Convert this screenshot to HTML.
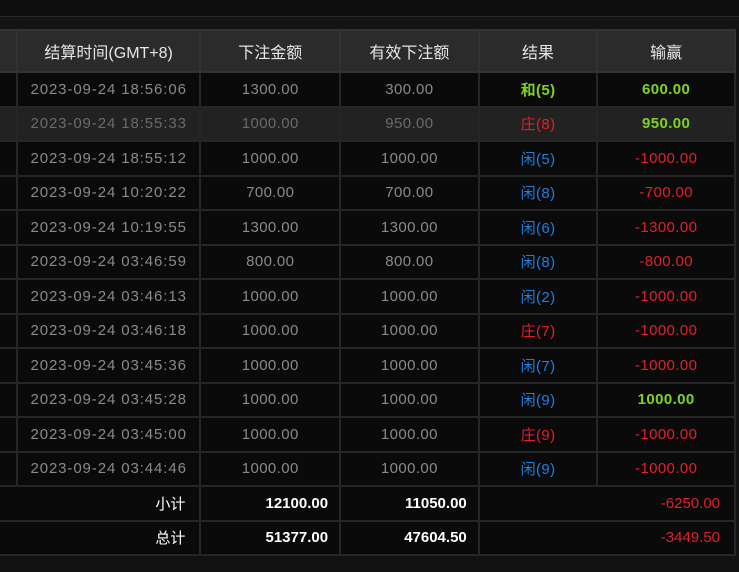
<!DOCTYPE html>
<html><head><meta charset="utf-8"><style>
*{margin:0;padding:0;box-sizing:border-box}
body{width:739px;height:572px;background:#111;overflow:hidden;font-family:"Liberation Sans","Noto Sans CJK SC",sans-serif;position:relative}
.top{position:absolute;left:0;top:0;width:739px;height:17px;background:#0e0e0e;border-bottom:1px solid #2a2a2a}
.band{position:absolute;left:0;top:18px;width:739px;height:11px;background:#141414}
table{position:absolute;left:-2px;top:29px;border-collapse:collapse;width:738px}
td{border:2px solid #262626;text-align:center;font-size:15px;letter-spacing:0.4px;color:#8a8a8a;height:34.5px;padding:0;background:#0a0a0a}
td.d{letter-spacing:0.9px}
tr.h td{background:#2b2b2b;color:#e6e6e6;height:42px;font-size:16px;border-color:#333;letter-spacing:0}
tr.hl td{background:#222;color:#6a6a6a}
.g{color:#7ed321!important;font-weight:bold}.r{color:#e0202a!important}.b{color:#1e7fe0!important}
tr.s td{text-align:right;color:#fff;font-weight:bold;padding-right:11px;border-left-color:#262626;letter-spacing:0}
tr.s td.l{font-weight:normal;padding-right:14px}
tr.s td.n{color:#e0202a;font-weight:normal;padding-right:14px}
</style></head><body>
<div class="top"></div><div class="band"></div>
<table>
<colgroup><col style="width:18px"><col style="width:184px"><col style="width:140px"><col style="width:139px"><col style="width:119px"><col style="width:138px"></colgroup>
<tr class="h"><td></td><td>结算时间(GMT+8)</td><td>下注金额</td><td>有效下注额</td><td>结果</td><td>输赢</td></tr>
<tr><td></td><td class="d">2023-09-24 18:56:06</td><td>1300.00</td><td>300.00</td><td class="g">和(5)</td><td class="g">600.00</td></tr>
<tr class="hl"><td></td><td class="d">2023-09-24 18:55:33</td><td>1000.00</td><td>950.00</td><td class="r">庄(8)</td><td class="g">950.00</td></tr>
<tr><td></td><td class="d">2023-09-24 18:55:12</td><td>1000.00</td><td>1000.00</td><td class="b">闲(5)</td><td class="r">-1000.00</td></tr>
<tr><td></td><td class="d">2023-09-24 10:20:22</td><td>700.00</td><td>700.00</td><td class="b">闲(8)</td><td class="r">-700.00</td></tr>
<tr><td></td><td class="d">2023-09-24 10:19:55</td><td>1300.00</td><td>1300.00</td><td class="b">闲(6)</td><td class="r">-1300.00</td></tr>
<tr><td></td><td class="d">2023-09-24 03:46:59</td><td>800.00</td><td>800.00</td><td class="b">闲(8)</td><td class="r">-800.00</td></tr>
<tr><td></td><td class="d">2023-09-24 03:46:13</td><td>1000.00</td><td>1000.00</td><td class="b">闲(2)</td><td class="r">-1000.00</td></tr>
<tr><td></td><td class="d">2023-09-24 03:46:18</td><td>1000.00</td><td>1000.00</td><td class="r">庄(7)</td><td class="r">-1000.00</td></tr>
<tr><td></td><td class="d">2023-09-24 03:45:36</td><td>1000.00</td><td>1000.00</td><td class="b">闲(7)</td><td class="r">-1000.00</td></tr>
<tr><td></td><td class="d">2023-09-24 03:45:28</td><td>1000.00</td><td>1000.00</td><td class="b">闲(9)</td><td class="g">1000.00</td></tr>
<tr><td></td><td class="d">2023-09-24 03:45:00</td><td>1000.00</td><td>1000.00</td><td class="r">庄(9)</td><td class="r">-1000.00</td></tr>
<tr><td></td><td class="d">2023-09-24 03:44:46</td><td>1000.00</td><td>1000.00</td><td class="b">闲(9)</td><td class="r">-1000.00</td></tr>
<tr class="s"><td colspan="2" class="l">小计</td><td>12100.00</td><td>11050.00</td><td colspan="2" class="n">-6250.00</td></tr>
<tr class="s"><td colspan="2" class="l">总计</td><td>51377.00</td><td>47604.50</td><td colspan="2" class="n">-3449.50</td></tr>
</table>
</body></html>
